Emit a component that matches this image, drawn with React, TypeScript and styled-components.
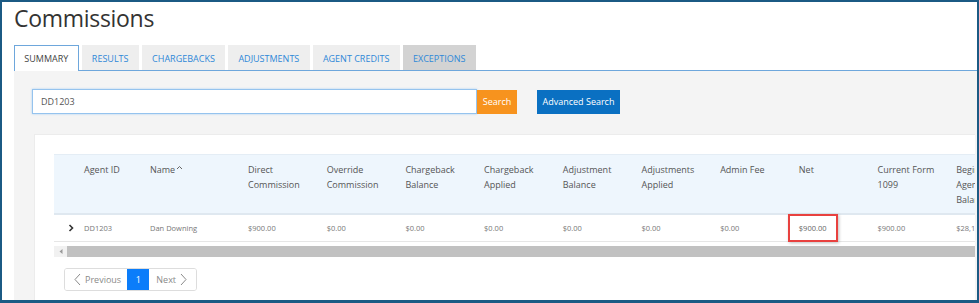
import styled, { createGlobalStyle } from 'styled-components';

const GlobalStyle = createGlobalStyle`
  body {
    margin: 0;
    font-family: "Open Sans", "Noto Sans", Arial, sans-serif;
    background: #ffffff;
  }
`;

const tabs = ['SUMMARY', 'RESULTS', 'CHARGEBACKS', 'ADJUSTMENTS', 'AGENT CREDITS', 'EXCEPTIONS'];

const columns = [
  { key: 'expand', label: '' },
  { key: 'agent', label: 'Agent ID' },
  { key: 'name', label: 'Name', sort: true },
  { key: 'direct', label: 'Direct Commission' },
  { key: 'override', label: 'Override Commission' },
  { key: 'cbBalance', label: 'Chargeback Balance' },
  { key: 'cbApplied', label: 'Chargeback Applied' },
  { key: 'adjBalance', label: 'Adjustment Balance' },
  { key: 'adjApplied', label: 'Adjustments Applied' },
  { key: 'admin', label: 'Admin Fee' },
  { key: 'net', label: 'Net' },
  { key: 'form', label: 'Current Form 1099' },
  { key: 'begin', label: 'Beginning Agent\nBalance' },
];

const row = ['DD1203', 'Dan Downing', '$900.00', '$0.00', '$0.00', '$0.00', '$0.00', '$0.00', '$0.00', '$900.00', '$900.00', '$28,100.00'];

const App = () => {
  return (
    <>
      <GlobalStyle />
      <Frame>
        <Title>Commissions</Title>
        <TabBar>
          {tabs.map((t, i) => (
            <Tab key={t} $active={i === 0} $muted={t === 'EXCEPTIONS'}>
              {t}
            </Tab>
          ))}
        </TabBar>
        <Panel>
          <SearchRow>
            <SearchInput defaultValue="DD1203" />
            <SearchButton>Search</SearchButton>
            <AdvancedButton>Advanced Search</AdvancedButton>
          </SearchRow>
          <Card>
            <Table>
              <HeadRow>
                {columns.map(c => (
                  <HeadCell key={c.key}>
                    {c.label}
                    {c.sort && (
                      <svg width="7" height="5" viewBox="0 0 7 5" style={{ marginLeft: 1, marginBottom: 3 }}>
                        <path d="M1 4 L3.5 1.5 L6 4" fill="none" stroke="#666" strokeWidth="1" />
                      </svg>
                    )}
                  </HeadCell>
                ))}
              </HeadRow>
              <BodyRow>
                <Cell>
                  <svg width="6" height="8" viewBox="0 0 6 8">
                    <path d="M1.5 1 L4.5 4 L1.5 7" fill="none" stroke="#333" strokeWidth="1.6" />
                  </svg>
                </Cell>
                {row.map((v, i) => (
                  <Cell key={i}>{i === 9 ? <Highlight>{v}</Highlight> : v}</Cell>
                ))}
              </BodyRow>
            </Table>
            <ScrollBar>
              <ScrollArrow>
                <svg width="4" height="5" viewBox="0 0 4 5">
                  <path d="M3.5 0 L0.5 2.5 L3.5 5 Z" fill="#9a9a9a" />
                </svg>
              </ScrollArrow>
              <ScrollThumb />
            </ScrollBar>
            <Pager>
              <PageLink $side="prev">
                <svg width="7" height="13" viewBox="0 0 7 13">
                  <path d="M6 1 L1 6.5 L6 12" fill="none" stroke="#8a8a8a" strokeWidth="1" />
                </svg>
                Previous
              </PageLink>
              <PageLink $active>1</PageLink>
              <PageLink $side="next">
                Next
                <svg width="7" height="13" viewBox="0 0 7 13">
                  <path d="M1 1 L6 6.5 L1 12" fill="none" stroke="#8a8a8a" strokeWidth="1" />
                </svg>
              </PageLink>
            </Pager>
          </Card>
        </Panel>
      </Frame>
    </>
  );
};

const Frame = styled.div`
  width: 979px;
  height: 303px;
  box-sizing: border-box;
  border: 2px solid #1b5a84;
  border-bottom-width: 3px;
  display: flex;
  flex-direction: column;
  overflow: hidden;
  background: #ffffff;
`;

const Title = styled.h1`
  margin: 1px 0 0 12px;
  font-size: 23px;
  line-height: 30px;
  font-weight: 400;
  letter-spacing: -0.3px;
  color: #333333;
`;

const TabBar = styled.div`
  display: flex;
  gap: 3px;
  margin: 12px 0 0 12px;
  border-bottom: 1px solid #6ea7dc;
`;

const Tab = styled.div<{ $active?: boolean; $muted?: boolean }>`
  box-sizing: border-box;
  padding: 0 9.3px;
  display: flex;
  align-items: center;
  font-size: 9px;
  color: ${p => (p.$active ? '#444444' : '#2f88d8')};
  background: ${p => (p.$active ? '#ffffff' : p.$muted ? '#d3d3d3' : '#eeeeee')};
  border: 1px solid ${p => (p.$active ? '#6ea7dc' : 'transparent')};
  border-bottom: none;
  margin-bottom: ${p => (p.$active ? '-1px' : '0')};
  height: ${p => (p.$active ? '26px' : '25px')};
`;

const Panel = styled.div`
  flex: 1;
  margin-left: 12px;
  background: #f4f4f4;
  padding: 18px 2px 0 18px;
  display: flex;
  flex-direction: column;
  min-height: 0;
`;

const SearchRow = styled.div`
  display: flex;
  align-items: center;
  height: 25px;
`;

const SearchInput = styled.input`
  width: 445px;
  height: 25px;
  box-sizing: border-box;
  border: 1px solid #95c3ee;
  box-shadow: 0 0 2px #a9d0f5;
  padding: 0 8px;
  font-family: inherit;
  font-size: 9px;
  color: #555555;
  outline: none;
  background: #ffffff;
`;

const SearchButton = styled.button`
  height: 24px;
  width: 40px;
  border: none;
  background: #f7931e;
  color: #ffffff;
  font-family: inherit;
  font-size: 9px;
  padding: 0;
`;

const AdvancedButton = styled.button`
  height: 24px;
  width: 83px;
  margin-left: 20px;
  border: none;
  background: #0a70c2;
  color: #ffffff;
  font-family: inherit;
  font-size: 9px;
  padding: 0;
`;

const Card = styled.div`
  flex: 1;
  margin: 20px 0 0 2px;
  background: #ffffff;
  border: 1px solid #ececec;
  border-bottom: none;
  border-right: none;
  padding: 19px 0 0 19px;
  overflow: hidden;
`;

const Table = styled.div`
  display: grid;
  grid-template-columns: 30px 66px 98px repeat(10, 78.7px);
  width: max-content;
`;

const HeadRow = styled.div`
  display: contents;
`;

const HeadCell = styled.div`
  background: #eef6fd;
  border-top: 1px solid #e4edf5;
  border-bottom: 2px solid #dfe8f0;
  height: 61px;
  box-sizing: border-box;
  padding: 7px 13px 0 0;
  font-size: 9px;
  line-height: 15px;
  color: #555555;
  white-space: pre-line;
`;

const BodyRow = styled.div`
  display: contents;
`;

const Cell = styled.div`
  height: 27px;
  box-sizing: border-box;
  border-bottom: 1px solid #e6e6e6;
  display: flex;
  align-items: center;
  font-size: 7.5px;
  color: #777777;

  &:first-child {
    padding-left: 14px;
  }
`;

const Highlight = styled.span`
  display: inline-block;
  margin-left: -11px;
  padding: 7px 9px;
  line-height: 10px;
  border: 2px solid #e8413f;
  box-shadow: 1px 1px 3px rgba(0, 0, 0, 0.25);
  color: #666666;
`;

const ScrollBar = styled.div`
  display: flex;
  height: 11px;
  margin-top: 4px;
`;

const ScrollArrow = styled.div`
  width: 13px;
  display: flex;
  align-items: center;
  justify-content: center;
  background: #f1f1f1;
`;

const ScrollThumb = styled.div`
  flex: 1;
  background: #c1c1c1;
`;

const Pager = styled.div`
  display: inline-flex;
  align-self: flex-start;
  margin: 11px 0 0 10px;
  border: 1px solid #dddddd;
  border-radius: 3px;
  height: 23px;
  box-sizing: border-box;
  overflow: hidden;
`;

const PageLink = styled.div<{ $active?: boolean; $side?: 'prev' | 'next' }>`
  display: flex;
  align-items: center;
  gap: 4px;
  padding: ${p => (p.$active ? '0 8.5px' : p.$side === 'prev' ? '0 6px 0 9px' : '0 9px 0 7px')};
  font-size: 9px;
  color: ${p => (p.$active ? '#ffffff' : '#8a8a8a')};
  background: ${p => (p.$active ? '#0b7dfa' : '#ffffff')};
`;

export default App;
